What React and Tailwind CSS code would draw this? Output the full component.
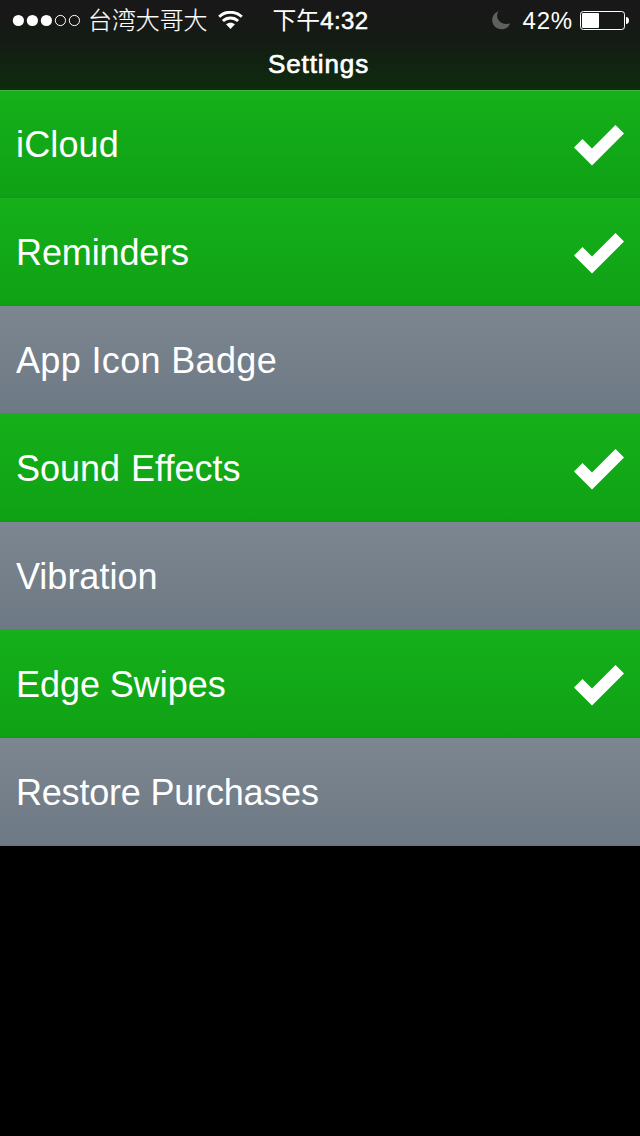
const rows = [
  { label: "iCloud", on: true, tracking: "tracking-[0.15px]" },
  { label: "Reminders", on: true, tracking: "tracking-[-0.12px]" },
  { label: "App Icon Badge", on: false, tracking: "tracking-[0.35px]" },
  { label: "Sound Effects", on: true, tracking: "tracking-normal text-[36.2px] [word-spacing:1px] [font-variant-ligatures:common-ligatures]" },
  { label: "Vibration", on: false, tracking: "tracking-normal" },
  { label: "Edge Swipes", on: true, tracking: "tracking-[-0.05px]" },
  { label: "Restore Purchases", on: false, tracking: "tracking-[-0.2px]" },
];

function SignalDots() {
  return (
    <svg className="h-[14px] w-[70px] shrink-0" viewBox="0 0 70 14">
      {[0, 1, 2, 3, 4].map((i) => (
        <circle
          key={i}
          cx={6.4 + i * 14}
          cy="7.5"
          r={i < 3 ? 5.6 : 5.1}
          fill={i < 3 ? "#fff" : "none"}
          stroke={i < 3 ? "none" : "#fff"}
          strokeWidth="1"
        />
      ))}
    </svg>
  );
}

function Wifi() {
  return (
    <svg className="ml-[11px] h-[18px] w-[25px] shrink-0" viewBox="0 0 25 18" fill="none" stroke="#fff">
      <path d="M1.2 5.8 C7.4 -0.3 17.4 -0.3 23.8 5.8" strokeWidth="2.9" />
      <path d="M4.9 10 C9 6 15.9 6 20.1 10" strokeWidth="2.8" />
      <path d="M12.5 18 L8 13.3 C10.3 11.2 14.7 11.2 17 13.3 Z" fill="#fff" stroke="none" />
    </svg>
  );
}

function Moon() {
  return (
    <svg className="h-[19px] w-[19px] shrink-0" viewBox="0 0 19 19">
      <path d="M6.4 0.2 C2.8 1.6 0.2 5 0.2 9.1 C0.2 14.3 4.3 18.3 9.4 18.3 C13.4 18.3 16.9 15.8 18.3 12.2 C17 12.8 15.4 13.1 14 13 C9.1 12.8 5.2 9.3 5.1 5 C5 3.2 5.5 1.6 6.4 0.2 Z" fill="#5f6160" />
    </svg>
  );
}

function Battery() {
  return (
    <svg className="ml-[7px] h-[19px] w-[49px] shrink-0" viewBox="0 0 49 19">
      <rect x="0.5" y="0.5" width="44" height="18" rx="2.8" fill="none" stroke="#fff" />
      <rect x="2" y="2" width="17" height="15" rx="1" fill="#fff" />
      <path d="M46 6 C48 6 49 7.5 49 9.5 C49 11.5 48 13 46 13 Z" fill="#fff" />
    </svg>
  );
}

function Check() {
  return (
    <svg className="mt-1 h-[42px] w-[50px]" viewBox="0 0 50 42">
      <path d="M0 22.5 L8.5 14 L18 23.5 L41.5 0 L50 8.5 L18 40.5 Z" fill="#fff" />
    </svg>
  );
}

export default function App() {
  return (
    <div className="flex min-h-[1136px] w-full flex-col bg-black font-['Liberation_Sans','Noto_Sans_CJK_TC',sans-serif] text-white">
      <header className="h-[90px] bg-linear-to-b from-[#181818] from-10% via-[#141b14] via-45% to-[#0c2c0d]">
        <div className="flex h-10 items-center pr-[11px] pl-3 whitespace-nowrap">
          <div className="flex flex-1 items-center">
            <SignalDots />
            <span className="ml-[6px] pb-0.5 font-['Noto_Sans_CJK_SC',sans-serif] text-[23.9px] leading-[38px] font-light [-webkit-text-stroke:0.2px_white]">台湾大哥大</span>
            <Wifi />
          </div>
          <div className="flex items-center leading-10">
            <span className="pb-0.5 font-['Noto_Sans_CJK_SC',sans-serif] text-[23.8px] leading-[38px]">下午</span>
            <span className="pt-0.5 text-[24px] tracking-[0.4px] [-webkit-text-stroke:0.5px_white]">4:32</span>
          </div>
          <div className="flex flex-1 items-center justify-end">
            <Moon />
            <span className="ml-[12px] pt-0.5 text-[24px] leading-10 tracking-[0.8px]">42%</span>
            <Battery />
          </div>
        </div>
        <h1 className="pr-[3px] text-center text-[26px] leading-[48px] font-normal tracking-[0.9px] [-webkit-text-stroke:0.7px_white]">Settings</h1>
      </header>
      <ul>
        {rows.map((row) => (
          <li
            key={row.label}
            className={
              row.on
                ? "flex h-[108px] items-center justify-between border-t border-b border-t-[#1bad1f] border-b-[#129718] bg-linear-to-b from-[#15b01a] to-[#0fa115] pr-4 pl-4 first:border-t-[#38b93b]"
                : "flex h-[108px] items-center justify-between border-t border-b border-t-[#7e8790] border-b-[#69747e] bg-linear-to-b from-[#7c8691] to-[#6d7984] pr-4 pl-4"
            }
          >
            <span className={`pt-0.5 text-[36px] leading-[44px] ${row.tracking}`}>{row.label}</span>
            {row.on && <Check />}
          </li>
        ))}
      </ul>
    </div>
  );
}
